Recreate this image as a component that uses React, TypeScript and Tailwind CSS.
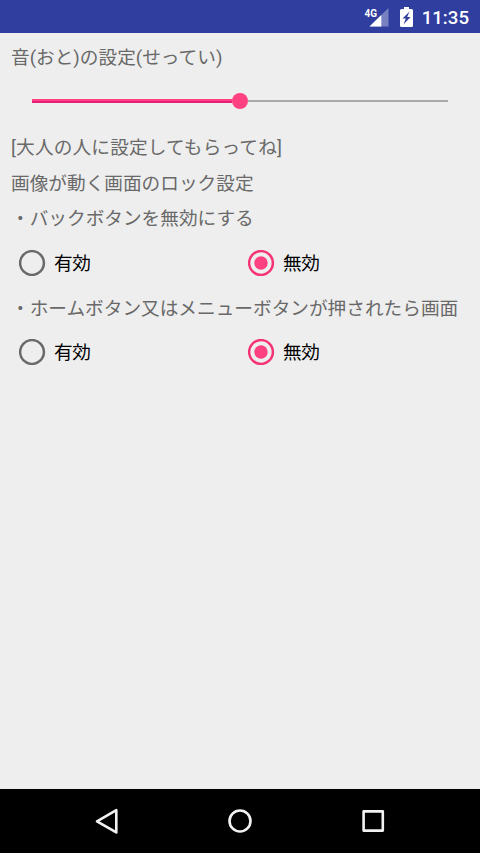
const lockSettings = [
  { name: 'back', label: '・バックボタンを無効にする', rowClass: 'h-9' },
  { name: 'home', label: '・ホームボタン又はメニューボタンが押されたら画面', rowClass: 'h-[35px]' },
];

function StatusBar() {
  return (
    <header className="h-[33px] shrink-0 bg-[#303f9f] flex items-center justify-end pr-[11px] text-white">
      <svg width="26" height="22" viewBox="0 0 26 22" className="shrink-0">
        <text x="0.5" y="10.5" fontSize="11" fontWeight="700" fill="#fff" textLength="12.5" lengthAdjust="spacingAndGlyphs">
          4G
        </text>
        <path d="M24.500 2V20.500H5.500Z" fill="#fff" fillOpacity="0.35" />
        <path d="M17.300 9V20.500H5.500Z" fill="#fff" />
      </svg>
      <svg width="13" height="20" viewBox="0 0 13 20" className="ml-[10px] shrink-0">
        <path d="M4 0h5v2h2.500a1.500 1.500 0 0 1 1.500 1.500v15a1.500 1.500 0 0 1-1.500 1.500h-10A1.500 1.500 0 0 1 0 18.500v-15A1.500 1.500 0 0 1 1.500 2H4z" fill="#fff" />
        <path d="M9.500 4.500 2.500 11.500h3.300L3.500 17.500l7-7.500H7.200z" fill="#303f9f" />
      </svg>
      <span className="ml-2 w-[48px] text-right text-[18.67px] leading-none font-medium whitespace-nowrap pt-[3px]">11:35</span>
    </header>
  );
}

function VolumeSlider() {
  return (
    <div className="h-10 px-8 flex items-center">
      <div className="w-[200px] h-1 bg-[#ff4081] border-b-2 border-[#e91e76]" />
      <div className="w-4 h-4 rounded-full bg-[#ff4081] shrink-0" />
      <div className="flex-1 h-[1.5px] bg-[#a8a8a8]" />
    </div>
  );
}

function Radio({ label, checked }: { label: string; checked?: boolean }) {
  return (
    <div className="w-[229px] flex items-center gap-[9px] text-black">
      <svg width="27" height="26" viewBox="0 0 27 26" className="-mr-px shrink-0">
        <circle cx="13" cy="13" r="11.900" fill="none" stroke={checked ? '#f53377' : '#696969'} strokeWidth="2.500" />
        {checked && <circle cx="13" cy="13" r="6.700" fill="#ff4081" />}
      </svg>
      <span className="pt-0.5 tracking-[-0.3px]">{label}</span>
    </div>
  );
}

function NavBar() {
  return (
    <footer className="h-16 shrink-0 bg-black flex items-center justify-around px-[40px]">
      <svg width="28" height="28" viewBox="0 0 28 28" fill="none" stroke="#f2f2f2" strokeWidth="2.600" strokeLinejoin="round">
        <path d="M23.300 3.200v22.200L4 14.300z" />
      </svg>
      <svg width="28" height="28" viewBox="0 0 28 28" fill="none" stroke="#f2f2f2" strokeWidth="2.600">
        <circle cx="14" cy="14" r="10.500" />
      </svg>
      <svg width="28" height="28" viewBox="0 0 28 28" fill="none" stroke="#f2f2f2" strokeWidth="2.600" strokeLinejoin="round">
        <rect x="4.600" y="4.400" width="19.200" height="19.200" />
      </svg>
    </footer>
  );
}

export default function App() {
  return (
    <div className="w-[480px] h-[853px] flex flex-col overflow-hidden bg-[#eeeeee] font-[Roboto,'Noto_Sans_CJK_JP',sans-serif]">
      <StatusBar />
      <main className="flex-1 text-[18.67px] leading-none text-[#696969] whitespace-nowrap">
        <p className="h-12 flex items-center pt-[3px] pl-[11px]">音(おと)の設定(せってい)</p>
        <VolumeSlider />
        <div className="mt-[7px]">
          <p className="h-9 flex items-center pt-[4px] pl-[11px] tracking-[0.15px]">[大人の人に設定してもらってね]</p>
          <p className="h-9 flex items-center pt-[4px] pl-[11px]">画像が動く画面のロック設定</p>
          {lockSettings.map((setting) => (
            <section key={setting.name}>
              <p className={`flex items-center pt-[3px] pl-[11px] ${setting.rowClass}`}>{setting.label}</p>
              <div className="h-[54px] flex items-center pl-[19px]">
                <Radio label="有効" />
                <Radio label="無効" checked />
              </div>
            </section>
          ))}
        </div>
      </main>
      <NavBar />
    </div>
  );
}
